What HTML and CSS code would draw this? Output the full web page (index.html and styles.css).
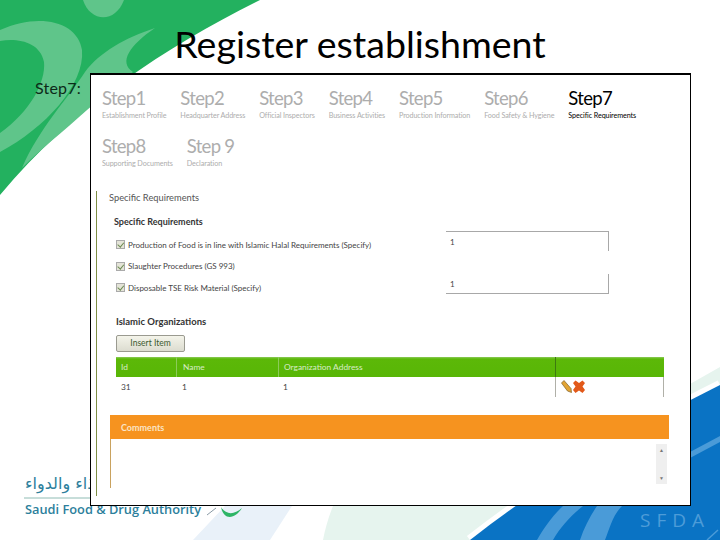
FILE: index.html
```html
<!DOCTYPE html>
<html>
  <head>
    <meta charset="utf-8">
    <title>Register establishment</title>
    <link rel="stylesheet" href="styles.css">
  </head>
  <body>
    <div class="slide">
      <svg class="slide-art" width="720" height="540" viewBox="0 0 720 540">
        <path d="M0 0H260C170 45 75 105 0 195Z" fill="#23b15f"/>
        <path d="M83 0C90 22 115 24 124 0Z" fill="#5fc58a"/>
        <path d="M0 30C40 12 78 22 82 50C85 85 45 128 0 152V133C30 112 46 82 44 62C40 42 18 38 0 41Z" fill="#5fc58a"/>
        <path d="M155 28C125 38 100 52 85 72C68 98 38 130 22 168C45 145 75 122 100 98L133 72C118 62 130 45 155 28Z" fill="#5fc58a"/>
        <path d="M720 367L690 384L333 506C328 518 325 530 323 540H720Z" fill="#e6f4ee"/>
        <path d="M720 385C640 425 560 470 470 540" stroke="#fff" stroke-width="10" fill="none"/>
        <path d="M720 385C640 425 560 470 470 540H720Z" fill="#0a73c4"/>
        <path d="M720 436V442L690 458V452Z" fill="#4a9bd8"/>
        <path d="M563 506H583C570 516 560 528 553 540H537C544 528 552 516 563 506Z" fill="#4a9bd8"/>
        <path d="M597 506H622C612 516 610 528 605 540H580C584 528 590 516 597 506Z" fill="#4a9bd8"/>
        <path d="M707 540L718 530" stroke="#4a9bd8" stroke-width="1.5" fill="none"/>
        <path d="M193 540L225 506H292L270 540Z" fill="#e9f1f9"/>
        <path d="M24 498H90" stroke="#8fbcb4" fill="none"/>
        <path d="M207 515L216 508" stroke="#8a9aa5" fill="none"/>
        <path d="M221 507C226 515 234 515 242 508C236 518 224 522 221 507Z" fill="#2eb566"/>
      </svg>

      <h1 class="slide-title">Register establishment</h1>
      <div class="step-label">Step7:</div>

      <div class="logo-ar" lang="ar" dir="rtl">للغذاء والدواء</div>
      <div class="logo-en">Saudi Food &amp; Drug Authority</div>
      <div class="logo-sfda">SFDA</div>

      <div class="shot">
        <div class="steps">
          <div class="step"><div class="step-name">Step1</div><div class="step-sub">Establishment Profile</div></div>
          <div class="step"><div class="step-name">Step2</div><div class="step-sub">Headquarter Address</div></div>
          <div class="step"><div class="step-name">Step3</div><div class="step-sub">Official Inspectors</div></div>
          <div class="step"><div class="step-name">Step4</div><div class="step-sub">Business Activities</div></div>
          <div class="step"><div class="step-name">Step5</div><div class="step-sub">Production Information</div></div>
          <div class="step"><div class="step-name">Step6</div><div class="step-sub">Food Safety &amp; Hygiene</div></div>
          <div class="step current"><div class="step-name">Step7</div><div class="step-sub">Specific Requirements</div></div>
        </div>
        <div class="steps">
          <div class="step"><div class="step-name">Step8</div><div class="step-sub">Supporting Documents</div></div>
          <div class="step"><div class="step-name">Step 9</div><div class="step-sub">Declaration</div></div>
        </div>

        <div class="panel">
          <div class="legend">Specific Requirements</div>
          <h4 class="group-title">Specific Requirements</h4>

          <div class="req-block">
            <div class="req-list">
              <label class="req"><span class="check"></span>Production of Food is in line with Islamic Halal Requirements (Specify)</label>
              <label class="req"><span class="check"></span>Slaughter Procedures (GS 993)</label>
              <label class="req"><span class="check"></span>Disposable TSE Risk Material (Specify)</label>
            </div>
            <div class="req-inputs">
              <div class="field field-top">1</div>
              <div class="field field-bottom">1</div>
            </div>
          </div>

          <h4 class="group-title org-title">Islamic Organizations</h4>
          <button class="insert-btn">Insert Item</button>

          <div class="org-table">
            <div class="org-row org-head">
              <div class="col-id">Id</div>
              <div class="col-name">Name</div>
              <div class="col-addr">Organization Address</div>
              <div class="col-act"></div>
            </div>
            <div class="org-row org-body">
              <div class="col-id">31</div>
              <div class="col-name">1</div>
              <div class="col-addr">1</div>
              <div class="col-act">
                <svg width="25" height="14" viewBox="0 0 25 14">
                  <path d="M0.5 3L3 0.5L10 8.5L10.5 12.5L6.5 11Z" fill="#e3a534" stroke="#80602a" stroke-width=".7"/>
                  <path d="M12 3L14.5 .5L18 3L21.5 .5L24 3L21.5 6.5L24 10L21.5 13L18 10.5L14.5 13L12 10L14.5 6.5Z" fill="#e2591a"/>
                </svg>
              </div>
            </div>
          </div>

          <div class="comments">
            <div class="comments-head">Comments</div>
            <div class="comments-body">
              <div class="scroll"><span>&#9650;</span><span>&#9660;</span></div>
            </div>
          </div>
        </div>
      </div>
    </div>
  </body>
</html>
```

FILE: styles.css
```css
body {
  margin: 0;
  background: #fff;
}
.slide {
  position: relative;
  width: 720px;
  height: 540px;
  overflow: hidden;
  background: #fff;
  font-family: Lato, sans-serif;
}
.slide-art {
  position: absolute;
  top: 0;
  left: 0;
}
.slide-title {
  position: absolute;
  top: 22px;
  left: 0;
  width: 720px;
  margin: 0;
  text-align: center;
  font-weight: 400;
  font-size: 37.5px;
  line-height: 44px;
  color: #000;
}
.step-label {
  position: absolute;
  top: 78px;
  left: 35px;
  font-size: 16px;
  line-height: 20px;
  letter-spacing: .2px;
  color: #0c2a18;
}
.logo-ar {
  position: absolute;
  top: 472px;
  left: 25px;
  width: 130px;
  font-family: "DejaVu Sans", sans-serif;
  font-size: 16px;
  line-height: 24px;
  text-align: left;
  color: #2d7f9c;
  white-space: nowrap;
}
.logo-en {
  position: absolute;
  top: 500px;
  left: 25px;
  font-family: "Open Sans", sans-serif;
  font-weight: 600;
  font-size: 12.8px;
  line-height: 18px;
  color: #2d7f9c;
  white-space: nowrap;
}
.logo-sfda {
  position: absolute;
  top: 507px;
  left: 640px;
  font-family: "Open Sans", sans-serif;
  font-size: 19px;
  line-height: 26px;
  letter-spacing: 6px;
  color: #4d9cd8;
}

/* the pasted screenshot */
.shot {
  position: absolute;
  top: 73px;
  left: 90px;
  width: 601px;
  height: 433px;
  box-sizing: border-box;
  padding: 11px 0 0 5px;
  background: #fff;
  border: 1.5px solid #000;
  border-top-width: 2px;
}
.steps {
  display: flex;
  gap: 14px;
  height: 48px;
  padding-left: 6px;
}
.step {
  color: #adadad;
}
.step.current {
  color: #000;
}
.step-name {
  font-size: 18.5px;
  line-height: 24px;
  letter-spacing: -.7px;
}
.step-sub {
  font-size: 7.2px;
  line-height: 11px;
  letter-spacing: -.1px;
  white-space: nowrap;
}

.panel {
  height: 305px;
  margin-top: 18px;
  padding-left: 12px;
  border-left: 1.5px solid #7f8f45;
  font-size: 8px;
  color: #444;
}
.legend {
  font-size: 9.3px;
  line-height: 13px;
  margin-top: -9px;
  color: #555;
}
.group-title {
  margin: 12px 0 0 5px;
  font-size: 9px;
  line-height: 12px;
  font-weight: 700;
  color: #333;
}
.req-block {
  display: flex;
  margin-left: 7px;
}
.req-list {
  width: 330px;
  padding-top: 6px;
}
.req {
  display: flex;
  align-items: center;
  height: 21.5px;
  white-space: nowrap;
}
.check {
  position: relative;
  width: 9px;
  height: 9px;
  margin-right: 3px;
  background: #e4e4d8;
  border: 1px solid #aaa;
  box-sizing: border-box;
}
.check::after {
  content: "";
  position: absolute;
  left: 1.5px;
  top: 0;
  width: 2.5px;
  height: 4.5px;
  border: solid #6b8a50;
  border-width: 0 1.5px 1.5px 0;
  transform: rotate(40deg);
}
.req-inputs {
  width: 163px;
  padding-top: 3px;
}
.field {
  box-sizing: border-box;
  height: 20px;
  padding-left: 4px;
  font-size: 8px;
  line-height: 20px;
  border-right: 1px solid #a8a8a8;
  color: #444;
}
.field-top {
  border-top: 1px solid #a8a8a8;
}
.field-bottom {
  margin-top: 23px;
  border-bottom: 1px solid #a8a8a8;
}
.group-title.org-title {
  margin: 17px 0 0 7px;
  font-size: 9.5px;
}
.insert-btn {
  display: block;
  width: 69px;
  height: 17px;
  margin: 7px 0 0 7px;
  padding: 0;
  font-family: inherit;
  font-size: 8.5px;
  color: #3d5a30;
  background: linear-gradient(#f4f4ea, #dcdcd0);
  border: 1px solid #9a9a90;
  border-radius: 2px;
}
.org-table {
  width: 548px;
  margin: 5px 0 0 7px;
  font-size: 8.4px;
}
.org-row {
  display: flex;
}
.org-head {
  height: 20px;
  line-height: 20px;
  color: #d8ecc8;
  background: linear-gradient(#8ccb5a 0, #5cb808 2px, #58b606);
}
.org-head > div {
  border-left: 1px solid #8ccb5a;
}
.org-head > .col-id {
  border-left: 0;
}
.org-head > .col-act {
  border-left-color: #3d7a10;
}
.org-body {
  height: 20px;
  line-height: 20px;
  border-right: 1px solid #b0b0a8;
}
.col-id {
  width: 60px;
  padding-left: 5px;
  box-sizing: border-box;
}
.col-name {
  width: 102px;
  padding-left: 6px;
  box-sizing: border-box;
}
.col-addr {
  width: 277px;
  padding-left: 5px;
  box-sizing: border-box;
}
.col-act {
  flex: 1;
  display: flex;
  align-items: center;
  padding-left: 5px;
  box-sizing: border-box;
}
.org-body > .col-act {
  border-left: 1px solid #b0b0a8;
}
.comments {
  width: 559px;
  margin-top: 18px;
  margin-left: 1px;
}
.comments-head {
  height: 24px;
  padding-left: 11px;
  font-weight: 700;
  font-size: 9px;
  line-height: 25px;
  color: #fbe4c4;
  background: #f6931f;
}
.comments-body {
  display: flex;
  justify-content: flex-end;
  height: 49px;
  padding: 5px 2px 0 0;
  box-sizing: border-box;
  border-left: 1px solid #c9a25f;
}
.scroll {
  display: flex;
  flex-direction: column;
  justify-content: space-between;
  width: 11px;
  height: 40px;
  padding: 3px 0;
  box-sizing: border-box;
  background: #efefef;
  font-size: 5px;
  line-height: 6px;
  text-align: center;
  color: #777;
}
```
